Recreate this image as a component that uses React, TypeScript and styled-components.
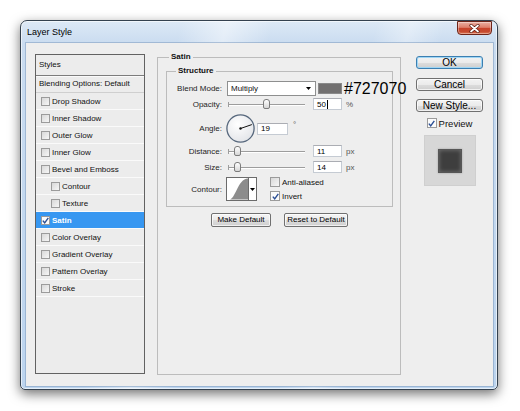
import React from 'react'
import styled, {createGlobalStyle} from 'styled-components'

const GlobalStyle = createGlobalStyle`
  html, body {
    margin: 0;
    padding: 0;
    background: #fff;
  }
  body {
    font-family: 'Liberation Sans', Arial, sans-serif;
    font-size: 8px;
    color: #111;
  }
`

const Page = styled.div`
  width: 520px;
  height: 411px;
  box-sizing: border-box;
  padding: 20px 0 0 20px;
`

const Window = styled.div`
  width: 478px;
  height: 370px;
  box-sizing: border-box;
  display: flex;
  flex-direction: column;
  padding: 0 4px 3px 5px;
  border: 1px solid #34414f;
  border-radius: 7px 7px 5px 5px;
  background:
    linear-gradient(105deg, rgba(255,255,255,0) 28%, rgba(255,255,255,.45) 36%, rgba(255,255,255,0) 44%,
      rgba(255,255,255,0) 62%, rgba(255,255,255,.35) 68%, rgba(255,255,255,0) 74%),
    linear-gradient(180deg, #dde9f6 0px, #cadcf0 22px, #bcd4ee 100%);
  box-shadow: 0 4px 12px rgba(0, 0, 0, 0.55), inset 0 0 0 1px rgba(255, 255, 255, 0.6);
`

const TitleBar = styled.div`
  height: 22px;
  flex: none;
  display: flex;
  justify-content: space-between;
  align-items: flex-start;
`

const Title = styled.div`
  padding-left: 1px;
  font-size: 9px;
  line-height: 22px;
  color: #000;
`

const CloseButton = styled.div`
  width: 35px;
  height: 14px;
  margin-right: 1px;
  box-sizing: border-box;
  display: flex;
  align-items: center;
  justify-content: center;
  border: 1px solid #6d2418;
  border-radius: 0 0 4px 4px;
  background: linear-gradient(180deg, #eab0a3 0%, #dd7e6a 45%, #c8432b 52%, #c64a2f 80%, #de7a58 100%);
  box-shadow: inset 0 0 0 1px rgba(255, 255, 255, 0.35);
`

const Client = styled.div`
  flex: 1;
  display: flex;
  align-items: flex-start;
  padding: 0 10px 0 9px;
  background: #eeeeee;
  box-shadow: 0 0 0 1px rgba(120, 150, 185, 0.5);
`

/* ---------- left styles list ---------- */

const StylesPanel = styled.div`
  width: 110px;
  height: 320px;
  margin-top: 11px;
  flex: none;
  box-sizing: border-box;
  border: 1px solid #626262;
  background: #ececec;
`

const PanelHeader = styled.div`
  height: 20px;
  line-height: 20px;
  padding-left: 3px;
  border-bottom: 1px solid #7c7c7c;
  box-shadow: 0 1px 0 #fafafa;
`

const BlendingRow = styled.div`
  height: 16px;
  line-height: 16px;
  padding-left: 3px;
  border-bottom: 1px solid #cfcfcf;
`

const StyleRow = styled.div<{$indent?: boolean; $active?: boolean}>`
  height: 16px;
  display: flex;
  align-items: center;
  gap: 2px;
  padding-left: ${(p) => (p.$indent ? 15 : 5)}px;
  border-bottom: 1px solid #fafafa;
  background: ${(p) => (p.$active ? '#3797f1' : 'transparent')};
  color: ${(p) => (p.$active ? '#fff' : '#111')};
  font-weight: ${(p) => (p.$active ? 'bold' : 'normal')};
`

const Box = styled.span<{$size?: number; $checked?: boolean}>`
  width: ${(p) => p.$size ?? 9}px;
  height: ${(p) => p.$size ?? 9}px;
  flex: none;
  box-sizing: border-box;
  display: flex;
  align-items: center;
  justify-content: center;
  border: 1px solid #9b9b9b;
  background: ${(p) => (p.$checked ? '#fbfbfb' : 'linear-gradient(135deg, #d8d8d8, #f6f6f6)')};
`

function Check({checked, size}: {checked?: boolean; size?: number}) {
  return (
    <Box $checked={checked} $size={size}>
      {checked && (
        <svg width="7" height="7" viewBox="0 0 7 7">
          <path d="M0.8 3.6 L2.7 5.8 L6.3 0.8" fill="none" stroke="#2b4f95" strokeWidth="1.4" />
        </svg>
      )}
    </Box>
  )
}

/* ---------- Satin group ---------- */

const Group = styled.fieldset`
  width: 244px;
  height: 323px;
  margin: 9px 0 0 12px;
  padding: 4px 7px 0 8px;
  box-sizing: border-box;
  flex: none;
  min-width: 0;
  border: 1px solid #bcbcbc;
`

const Legend = styled.legend<{$offset: number}>`
  margin-left: ${(p) => p.$offset}px;
  padding: 0 2px;
  font-weight: bold;
  line-height: 10px;
`

const SubGroup = styled.fieldset`
  margin: 0;
  padding: 0 0 5px 0;
  min-width: 0;
  border: 1px solid #bcbcbc;
`

const Row = styled.div<{$h: number; $mt: number}>`
  height: ${(p) => p.$h}px;
  margin-top: ${(p) => p.$mt}px;
  display: flex;
  align-items: center;
  white-space: nowrap;

  & > * {
    flex: none;
  }
`

const Label = styled.div`
  width: 55px;
  margin-right: 5px;
  text-align: right;
  color: #1e1e1e;
`

const Select = styled.div`
  width: 89px;
  height: 15px;
  box-sizing: border-box;
  display: flex;
  align-items: center;
  justify-content: space-between;
  padding: 0 4px 0 3px;
  border: 1px solid #8e8f8f;
  background: #fff;
`

const Swatch = styled.div<{$color: string}>`
  width: 24px;
  height: 11px;
  margin-left: 2px;
  box-sizing: border-box;
  border: 1px solid #8a8a8a;
  background: ${(p) => p.$color};
`

const HexText = styled.div`
  margin-left: 2px;
  font-size: 16px;
  line-height: 15px;
  color: #000;
`

const Track = styled.div`
  position: relative;
  width: 77px;
  height: 10px;
  margin-left: 1px;

  &::before {
    content: '';
    position: absolute;
    left: 0;
    right: 0;
    top: 5px;
    height: 1px;
    background: #9d9d9d;
    box-shadow: 0 1px 0 #fff;
  }
  &::after {
    content: '';
    position: absolute;
    left: 0;
    top: 3px;
    width: 1px;
    height: 5px;
    background: #9d9d9d;
  }
`

const Thumb = styled.div`
  position: absolute;
  top: 0;
  width: 7px;
  height: 10px;
  box-sizing: border-box;
  border: 1px solid #7c7c7c;
  border-radius: 3px 3px 2px 2px;
  background: linear-gradient(180deg, #ffffff, #d6d6d6);
  z-index: 1;
`

const Field = styled.div<{$w: number; $ml: number}>`
  width: ${(p) => p.$w}px;
  height: 12px;
  margin-left: ${(p) => p.$ml}px;
  box-sizing: border-box;
  display: flex;
  align-items: center;
  padding-left: 3px;
  border: 1px solid #c5cbd3;
  border-top-color: #abadb3;
  background: #fff;
  color: #000;
`

const Caret = styled.span`
  width: 1px;
  height: 9px;
  margin-left: 1px;
  background: #000;
`

const Unit = styled.div<{$ml: number; $up?: boolean}>`
  margin-left: ${(p) => p.$ml}px;
  color: #555;
  align-self: ${(p) => (p.$up ? 'flex-start' : 'center')};
  margin-top: ${(p) => (p.$up ? 6 : 0)}px;
`

const Dial = styled.svg`
  margin-left: -1px;
`

const ContourBox = styled.div`
  width: 31px;
  height: 24px;
  margin-left: -1px;
  box-sizing: border-box;
  display: flex;
  border: 1px solid #6b6b6b;
  background: #fff;
`

const ContourArrow = styled.div`
  width: 7px;
  display: flex;
  align-items: center;
  justify-content: center;
  border-left: 1px solid #6b6b6b;
`

const CheckStack = styled.div`
  margin-left: 13px;
  display: flex;
  flex-direction: column;
  gap: 4px;
`

const CheckLine = styled.div`
  height: 10px;
  display: flex;
  align-items: center;
  gap: 2px;
`

const ButtonBar = styled.div`
  margin-top: 6px;
  display: flex;
  justify-content: center;
  gap: 13px;
`

const SmallButton = styled.div<{$w: number}>`
  width: ${(p) => p.$w}px;
  height: 14px;
  box-sizing: border-box;
  border: 1px solid #707070;
  border-radius: 2px;
  background: linear-gradient(180deg, #f4f4f4 0%, #ebebeb 50%, #dddddd 51%, #cfcfcf 100%);
  box-shadow: inset 0 0 0 1px rgba(255, 255, 255, 0.7);
  text-align: center;
  line-height: 12px;
  color: #000;
`

/* ---------- right column ---------- */

const SideColumn = styled.div`
  width: 67px;
  margin: 13px 0 0 15px;
  flex: none;
  display: flex;
  flex-direction: column;
  align-items: center;
`

const DialogButton = styled.div<{$primary?: boolean; $mt: number}>`
  width: 67px;
  height: 13px;
  margin-top: ${(p) => p.$mt}px;
  box-sizing: border-box;
  border: 1px solid ${(p) => (p.$primary ? '#3c7fb1' : '#707070')};
  border-radius: 3px;
  background: linear-gradient(180deg, #f3f3f3 0%, #ebebeb 50%, #dddddd 51%, #cfcfcf 100%);
  box-shadow: inset 0 0 0 1px ${(p) => (p.$primary ? '#9fd6f5' : 'rgba(255,255,255,.7)')};
  font-size: 10px;
  line-height: 11px;
  text-align: center;
  color: #000;
`

const PreviewToggle = styled.div`
  height: 10px;
  margin-top: 6px;
  display: flex;
  align-items: center;
  gap: 2px;
  font-size: 9.5px;
`

const PreviewWell = styled.div`
  width: 52px;
  height: 51px;
  margin-top: 7px;
  box-sizing: border-box;
  display: flex;
  align-items: center;
  justify-content: center;
  border: 1px solid #cfcfcf;
  background: #d7d7d7;
`

const PreviewSquare = styled.div`
  width: 24px;
  height: 24px;
  box-sizing: border-box;
  border: 1px solid #575757;
  background: #3e3e3e;
  box-shadow: inset 0 0 4px rgba(140, 140, 140, 0.7), 0 0 2px rgba(0, 0, 0, 0.25);
`

const styleItems = [
  {label: 'Drop Shadow'},
  {label: 'Inner Shadow'},
  {label: 'Outer Glow'},
  {label: 'Inner Glow'},
  {label: 'Bevel and Emboss'},
  {label: 'Contour', indent: true},
  {label: 'Texture', indent: true},
  {label: 'Satin', checked: true, active: true},
  {label: 'Color Overlay'},
  {label: 'Gradient Overlay'},
  {label: 'Pattern Overlay'},
  {label: 'Stroke'},
]

function Slider({thumb}: {thumb: number}) {
  return (
    <Track>
      <Thumb style={{left: thumb}} />
    </Track>
  )
}

function DownArrow() {
  return (
    <svg width="5" height="3" viewBox="0 0 5 3">
      <path d="M0 0 H5 L2.5 3 Z" fill="#000" />
    </svg>
  )
}

export default function App() {
  const angle = 19
  const rad = (angle * Math.PI) / 180
  const ex = 14.5 + 12 * Math.cos(rad)
  const ey = 14.5 - 12 * Math.sin(rad)

  return (
    <Page>
      <GlobalStyle />
      <Window>
        <TitleBar>
          <Title>Layer Style</Title>
          <CloseButton>
            <svg width="11" height="9" viewBox="0 0 11 9">
              <path d="M2 1.5 L9 7.5 M9 1.5 L2 7.5" stroke="#5b1c12" strokeWidth="3.2" strokeLinecap="round" />
              <path d="M2 1.5 L9 7.5 M9 1.5 L2 7.5" stroke="#fff" strokeWidth="1.7" strokeLinecap="round" />
            </svg>
          </CloseButton>
        </TitleBar>
        <Client>
          <StylesPanel>
            <PanelHeader>Styles</PanelHeader>
            <BlendingRow>Blending Options: Default</BlendingRow>
            {styleItems.map((item) => (
              <StyleRow key={item.label} $indent={item.indent} $active={item.active}>
                <Check checked={item.checked} />
                {item.label}
              </StyleRow>
            ))}
          </StylesPanel>

          <Group>
            <Legend $offset={3}>Satin</Legend>
            <SubGroup>
              <Legend $offset={9}>Structure</Legend>
              <Row $h={15} $mt={5}>
                <Label>Blend Mode:</Label>
                <Select>
                  <span>Multiply</span>
                  <DownArrow />
                </Select>
                <Swatch $color="#727070" />
                <HexText>#727070</HexText>
              </Row>
              <Row $h={14} $mt={1}>
                <Label>Opacity:</Label>
                <Slider thumb={35} />
                <Field $w={29} $ml={8}>
                  50
                  <Caret />
                </Field>
                <Unit $ml={4}>%</Unit>
              </Row>
              <Row $h={29} $mt={3}>
                <Label>Angle:</Label>
                <Dial width="29" height="29" viewBox="0 0 29 29">
                  <defs>
                    <radialGradient id="dialFill" cx="40%" cy="35%" r="70%">
                      <stop offset="0%" stopColor="#ffffff" />
                      <stop offset="100%" stopColor="#e2e4e8" />
                    </radialGradient>
                  </defs>
                  <circle cx="14.5" cy="14.5" r="13.6" fill="url(#dialFill)" stroke="#56677c" strokeWidth="1.3" />
                  <line x1="14.5" y1="14.5" x2={ex} y2={ey} stroke="#111" strokeWidth="1" />
                  <circle cx="14.5" cy="14.5" r="1.2" fill="#111" />
                </Dial>
                <Field $w={31} $ml={2}>
                  {angle}
                </Field>
                <Unit $ml={5} $up>
                  °
                </Unit>
              </Row>
              <Row $h={14} $mt={1}>
                <Label>Distance:</Label>
                <Slider thumb={6} />
                <Field $w={29} $ml={8}>
                  11
                </Field>
                <Unit $ml={4}>px</Unit>
              </Row>
              <Row $h={14} $mt={2}>
                <Label>Size:</Label>
                <Slider thumb={6} />
                <Field $w={29} $ml={8}>
                  14
                </Field>
                <Unit $ml={4}>px</Unit>
              </Row>
              <Row $h={24} $mt={3}>
                <Label>Contour:</Label>
                <ContourBox>
                  <svg width="22" height="22" viewBox="0 0 22 22">
                    <path d="M2 22 C 9 22, 11 0, 22 0 L22 22 Z" fill="#8c8c8c" />
                  </svg>
                  <ContourArrow>
                    <DownArrow />
                  </ContourArrow>
                </ContourBox>
                <CheckStack>
                  <CheckLine>
                    <Check size={10} />
                    Anti-aliased
                  </CheckLine>
                  <CheckLine>
                    <Check size={10} checked />
                    Invert
                  </CheckLine>
                </CheckStack>
              </Row>
            </SubGroup>
            <ButtonBar>
              <SmallButton $w={60}>Make Default</SmallButton>
              <SmallButton $w={64}>Reset to Default</SmallButton>
            </ButtonBar>
          </Group>

          <SideColumn>
            <DialogButton $primary $mt={0}>
              OK
            </DialogButton>
            <DialogButton $mt={9}>Cancel</DialogButton>
            <DialogButton $mt={8}>New Style...</DialogButton>
            <PreviewToggle>
              <Check size={10} checked />
              Preview
            </PreviewToggle>
            <PreviewWell>
              <PreviewSquare />
            </PreviewWell>
          </SideColumn>
        </Client>
      </Window>
    </Page>
  )
}
